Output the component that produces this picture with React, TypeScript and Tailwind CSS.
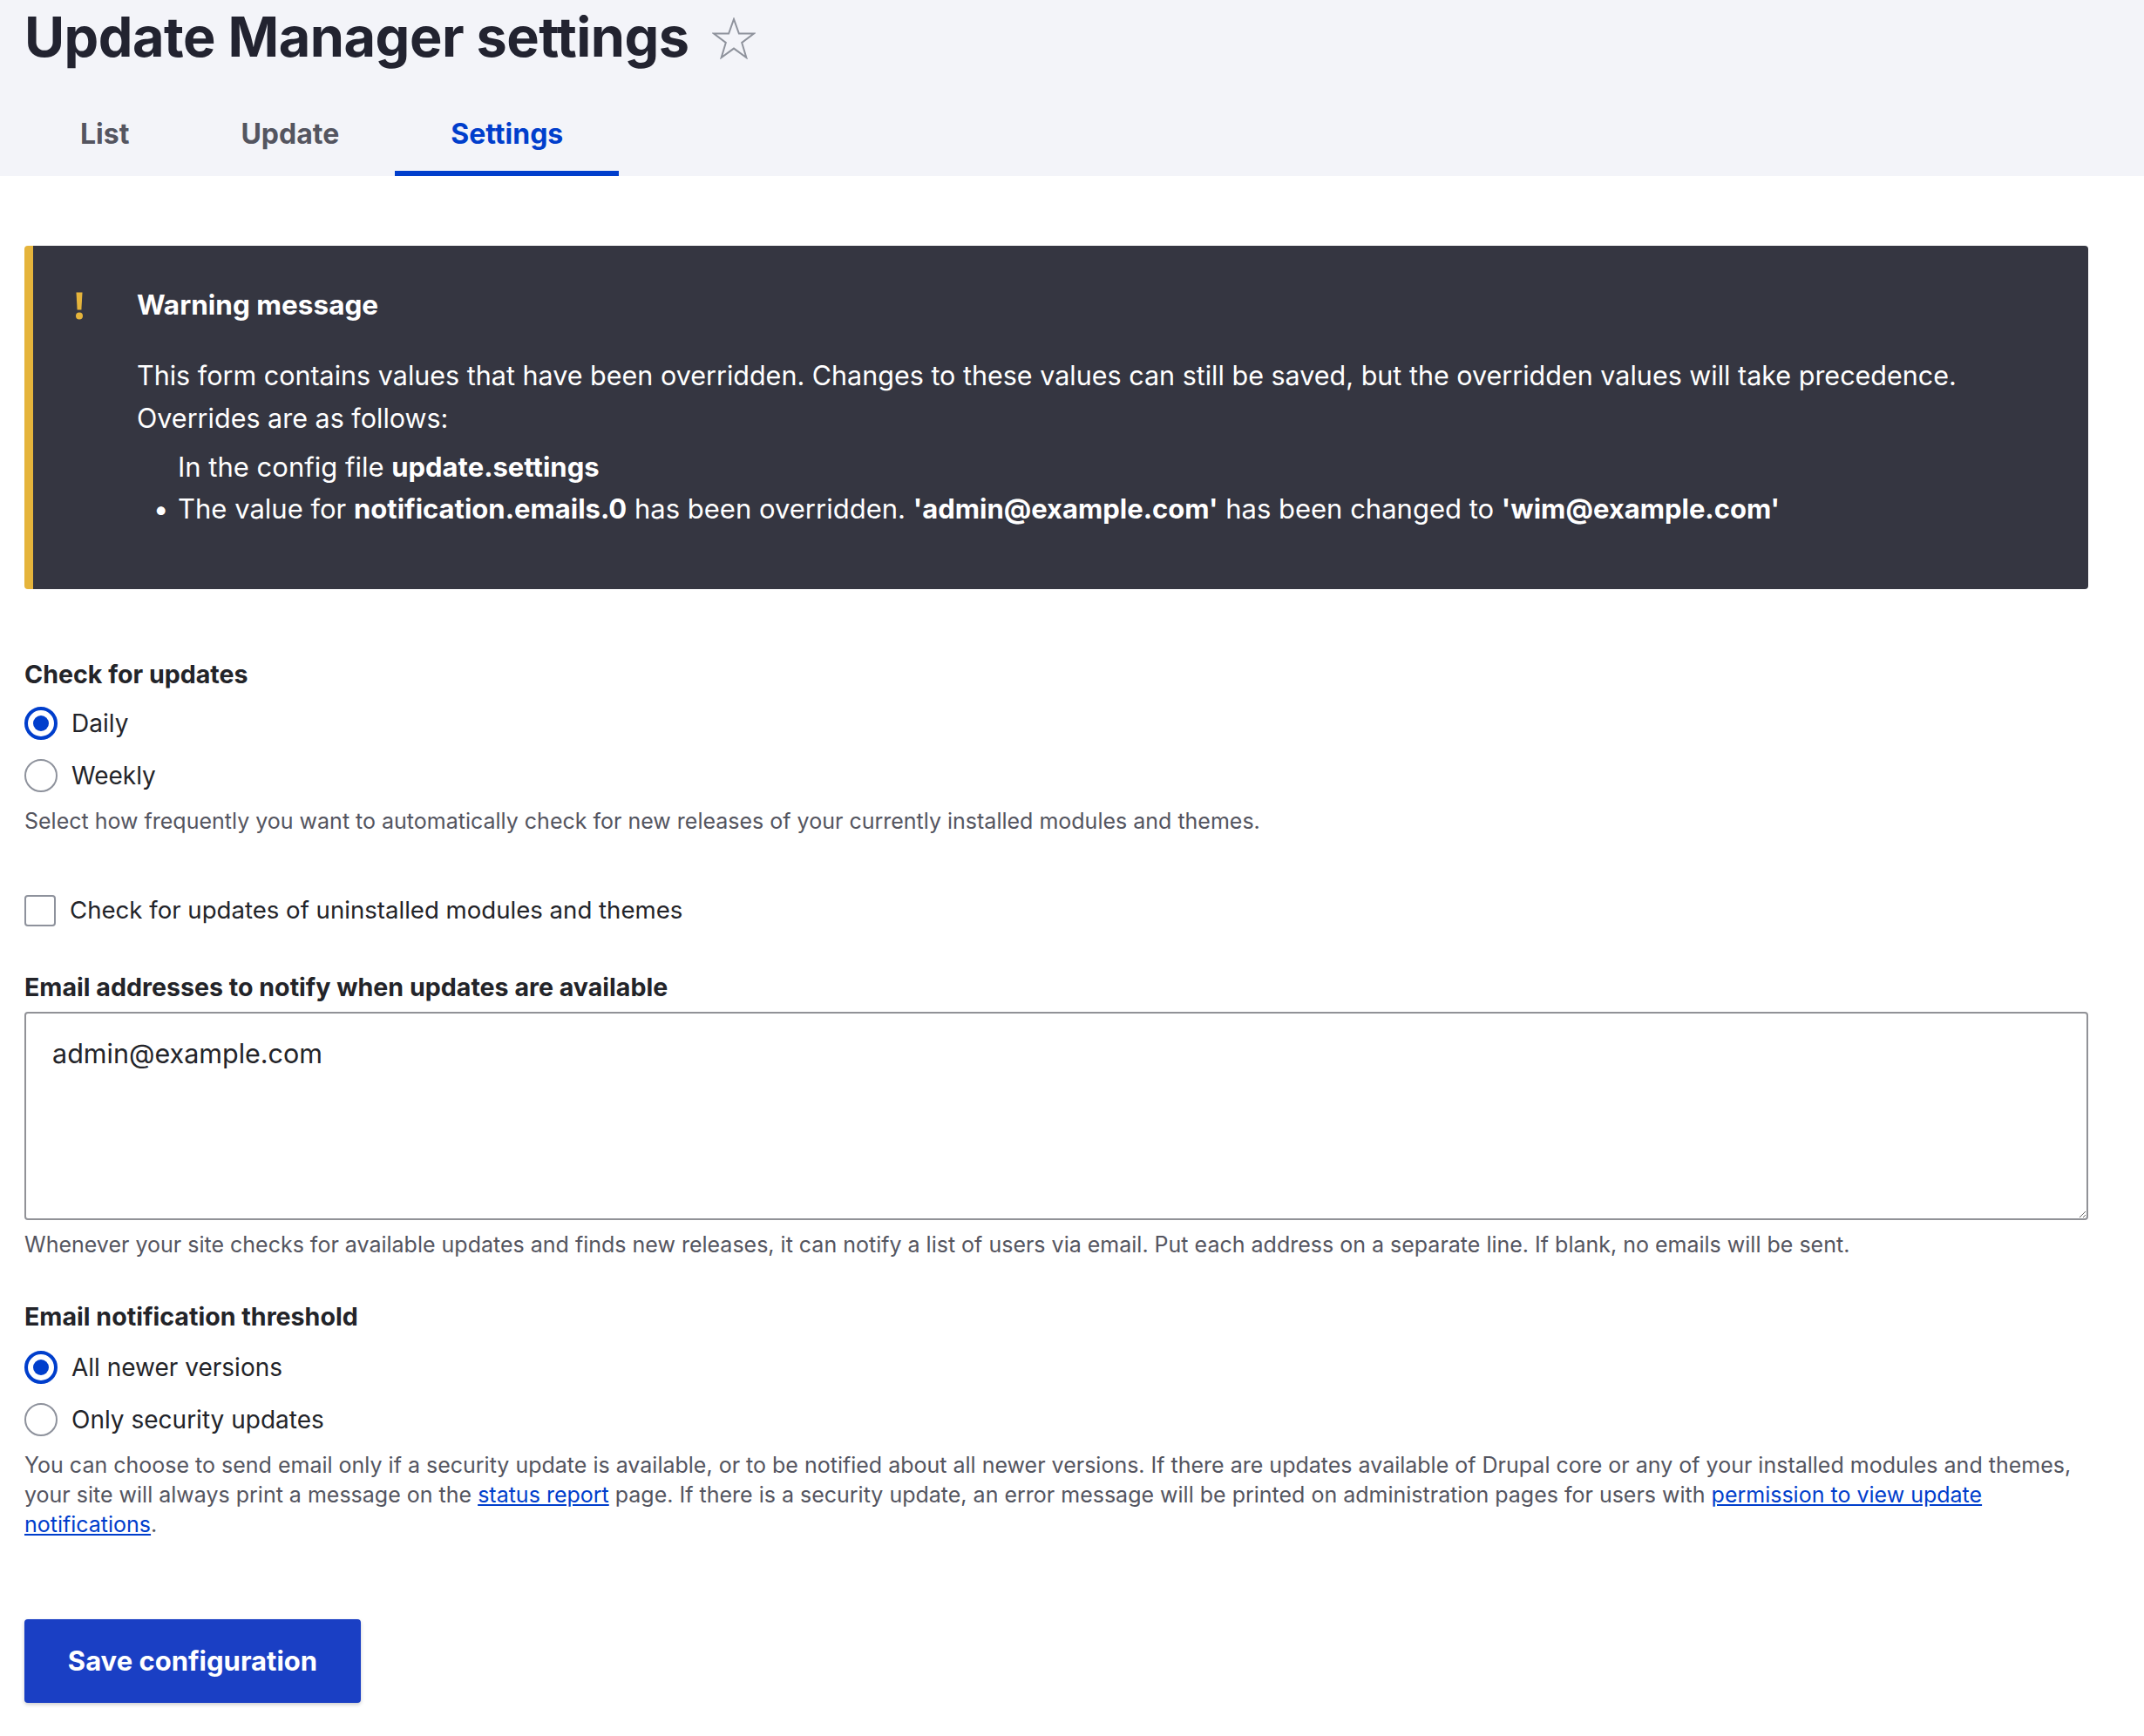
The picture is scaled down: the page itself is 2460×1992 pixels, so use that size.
import React from "react";

const Radio = ({ checked, label }: { checked?: boolean; label: string }) => (
  <div className="flex h-[60px] items-center gap-[16px]">
    {checked ? (
      <span className="flex h-[38px] w-[38px] items-center justify-center rounded-full border-[4px] border-[#003ecc] bg-white">
        <span className="h-[18px] w-[18px] rounded-full bg-[#003ecc]" />
      </span>
    ) : (
      <span className="h-[38px] w-[38px] rounded-full border-[2px] border-[#8e929c] bg-white" />
    )}
    <span className="text-[28px] text-[#232429]">{label}</span>
  </div>
);

const Star = () => (
  <svg width="50" height="48" viewBox="0 0 50 48" className="mt-[4px]">
    <polygon
      points="25,2 30.9,18.6 48,18.6 34.2,29 39.3,46 25,35.6 10.7,46 15.8,29 2,18.6 19.1,18.6"
      fill="none"
      stroke="#8e929c"
      strokeWidth="2"
      strokeLinejoin="miter"
    />
  </svg>
);

// yellow exclamation icon of the warning
const Bang = () => (
  <svg width="10" height="33" viewBox="0 0 10 33">
    <path d="M1.5 1.5 H8.5 L7.4 21.5 H2.6 Z" fill="#e5b43b" />
    <circle cx="5" cy="28.5" r="4" fill="#e5b43b" />
  </svg>
);

const App = () => {
  return (
    <div className="min-h-[1992px] bg-white font-['Inter',sans-serif] text-[#232429]">
      {/* page header */}
      <header className="bg-[#f3f4f9] px-[28px]">
        <div className="flex h-[84px] items-center gap-[26px]">
          <h1 className="text-[63px] font-bold leading-[84px] tracking-[-0.5px] text-[#222330]">
            Update Manager settings
          </h1>
          <Star />
        </div>
        <nav className="mt-[22px] flex h-[96px]">
          <a className="flex items-center px-[64px] text-[32px] font-bold text-[#545560]">List</a>
          <a className="flex items-center px-[64px] text-[32px] font-bold text-[#545560]">Update</a>
          <a className="flex items-center border-b-[6px] border-[#003ecc] px-[64px] pt-[6px] text-[32px] font-bold text-[#003ecc]">
            Settings
          </a>
        </nav>
      </header>

      <main className="px-[28px]">
        {/* warning */}
        <div className="mt-[80px] flex h-[394px] w-[2368px] rounded-[4px] border-l-[10px] border-[#e5b43b] bg-[#353641] text-[31px] leading-[48px] text-white">
          <div className="w-[119px] pt-[52px] pl-[48px]">
            <Bang />
          </div>
          <div className="pt-[44px]">
            <h2 className="text-[31.5px] font-bold leading-[48px]">Warning message</h2>
            <p className="mt-[32px] text-[30.5px] leading-[49px]">
              This form contains values that have been overridden. Changes to these values can still be saved, but the
              overridden values will take precedence.
              <br />
              Overrides are as follows:
            </p>
            <div className="mt-[8px] pl-[47px]">
              In the config file <b>update.settings</b>
            </div>
            <ul className="pl-[47px]">
              <li className="relative">
                <span className="absolute left-[-28px]">•</span>
                The value for <b>notification.emails.0</b> has been overridden. <b>'admin@example.com'</b> has been
                changed to <b>'wim@example.com'</b>
              </li>
            </ul>
          </div>
        </div>

        {/* check for updates */}
        <div className="mt-[76px] flex h-[44px] items-center text-[28.6px] font-bold">Check for updates</div>
        <div className="mt-[4px]">
          <Radio checked label="Daily" />
          <Radio label="Weekly" />
        </div>
        <div className="flex h-[46px] items-center text-[25px] text-[#545560]">
          Select how frequently you want to automatically check for new releases of your currently installed modules
          and themes.
        </div>

        <div className="mt-[49px] flex h-[60px] items-center gap-[16px]">
          <span className="h-[36px] w-[36px] rounded-[4px] border-[2px] border-[#8e929c] bg-white" />
          <span className="text-[27.6px]">Check for updates of uninstalled modules and themes</span>
        </div>

        {/* email */}
        <div className="mt-[36px] flex h-[44px] items-center text-[28.6px] font-bold">
          Email addresses to notify when updates are available
        </div>
        <textarea
          className="mt-[6px] block h-[239px] w-[2368px] rounded-[4px] border-[2px] border-[#919297] px-[30px] pt-[22px] font-['Inter',sans-serif] text-[30.5px] leading-[48px] text-[#232429]"
          defaultValue="admin@example.com"
        />
        <div className="mt-[12px] flex h-[34px] items-center text-[25px] text-[#545560]">
          Whenever your site checks for available updates and finds new releases, it can notify a list of users via
          email. Put each address on a separate line. If blank, no emails will be sent.
        </div>

        {/* threshold */}
        <div className="mt-[43px] flex h-[44px] items-center text-[28.6px] font-bold">Email notification threshold</div>
        <div className="mt-[6px]">
          <Radio checked label="All newer versions" />
          <Radio label="Only security updates" />
        </div>
        <p className="mt-[5px] whitespace-nowrap text-[25px] leading-[34px] text-[#545560]">
          You can choose to send email only if a security update is available, or to be notified about all newer
          versions. If there are updates available of Drupal core or any of your installed modules and themes,
          <br />
          your site will always print a message on the{" "}
          <a className="text-[#003ecc] underline">status report</a> page. If there is a security update, an error
          message will be printed on administration pages for users with{" "}
          <a className="text-[#003ecc] underline">
            permission to view update
            <br />
            notifications
          </a>
          .
        </p>

        <button className="mt-[92px] h-[96px] w-[386px] rounded-[4px] bg-[#1a3fc4] text-[31px] font-bold text-white shadow-[0_2px_4px_rgba(0,0,0,0.2)]">
          Save configuration
        </button>
      </main>
    </div>
  );
};

export default App;
